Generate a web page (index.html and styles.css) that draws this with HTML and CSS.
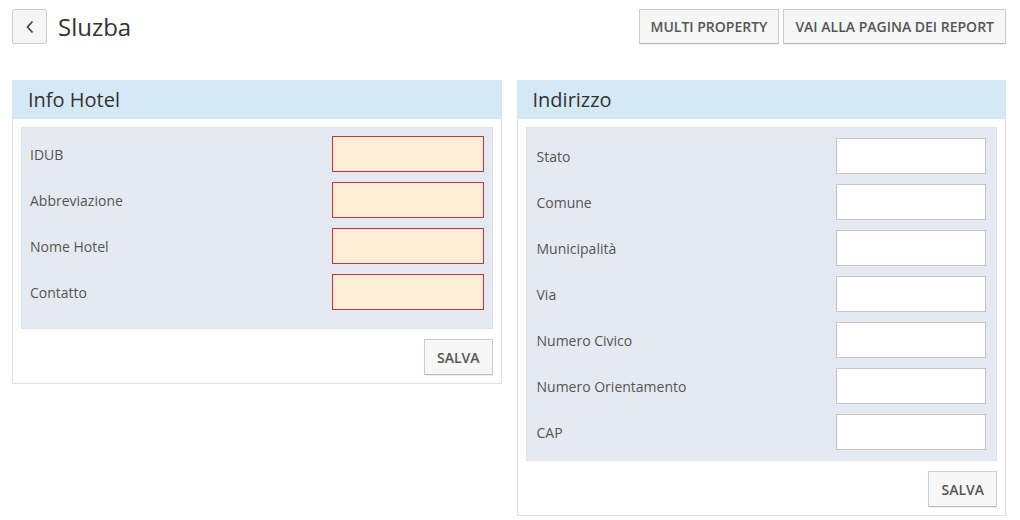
FILE: index.html
```html
<!DOCTYPE html>
<html lang="it">

<head>
    <meta charset="UTF-8">
    <title>Sluzba</title>
    <link rel="stylesheet" href="styles.css">
</head>

<body>
    <div class="page">
        <div class="topbar">
            <div class="title-wrap">
                <button class="back-btn" aria-label="Indietro">
                    <svg width="10" height="14" viewBox="0 0 10 14">
                        <path d="M7.5 1.5 L2.5 7 L7.5 12.5" fill="none" stroke="#444" stroke-width="1.7" />
                    </svg>
                </button>
                <h1>Sluzba</h1>
            </div>
            <div class="actions">
                <button class="btn">Multi property</button>
                <button class="btn">Vai alla pagina dei report</button>
            </div>
        </div>

        <div class="panels">
            <div class="panel">
                <div class="panel-head">Info Hotel</div>
                <div class="panel-body">
                    <div class="fields">
                        <div class="row"><label>IDUB</label><input class="required" type="text"></div>
                        <div class="row"><label>Abbreviazione</label><input class="required" type="text"></div>
                        <div class="row"><label>Nome Hotel</label><input class="required" type="text"></div>
                        <div class="row"><label>Contatto</label><input class="required" type="text"></div>
                    </div>
                    <div class="panel-foot">
                        <button class="btn">Salva</button>
                    </div>
                </div>
            </div>

            <div class="panel">
                <div class="panel-head">Indirizzo</div>
                <div class="panel-body">
                    <div class="fields wide">
                        <div class="row"><label>Stato</label><input type="text"></div>
                        <div class="row"><label>Comune</label><input type="text"></div>
                        <div class="row"><label>Municipalità</label><input type="text"></div>
                        <div class="row"><label>Via</label><input type="text"></div>
                        <div class="row"><label>Numero Civico</label><input type="text"></div>
                        <div class="row"><label>Numero Orientamento</label><input type="text"></div>
                        <div class="row"><label>CAP</label><input type="text"></div>
                    </div>
                    <div class="panel-foot">
                        <button class="btn">Salva</button>
                    </div>
                </div>
            </div>
        </div>
    </div>
</body>

</html>
```

FILE: styles.css
```css
body {
    margin: 0;
    font-family: "Open Sans", Arial, sans-serif;
    background-color: #fff;
    color: #333;
}

.page {
    padding: 9px 14px 0 12px;
}

.topbar {
    display: flex;
    justify-content: space-between;
    align-items: center;
}

.title-wrap {
    display: flex;
    align-items: center;
}

.back-btn {
    width: 35px;
    height: 35px;
    padding: 0;
    border: 1px solid #ccc;
    border-radius: 2px;
    background-color: #f6f6f6;
    display: flex;
    align-items: center;
    justify-content: center;
    cursor: pointer;
}

h1 {
    margin: 0 0 0 11px;
    font-size: 24px;
    font-weight: normal;
    color: #333;
}

.actions {
    display: flex;
    gap: 4px;
}

.btn {
    height: 35px;
    padding: 0 11px;
    font-family: "Open Sans", Arial, sans-serif;
    font-size: 14px;
    font-weight: 600;
    text-transform: uppercase;
    color: #555;
    background-color: #f7f7f7;
    border: 1px solid #ccc;
    border-bottom-color: #bbb;
    border-radius: 1px;
    box-shadow: 0 1px 1px rgba(0, 0, 0, 0.08);
    cursor: pointer;
}

.panels {
    display: grid;
    grid-template-columns: 1fr 1fr;
    gap: 15px;
    align-items: start;
    margin-top: 36px;
}

.panel {
    border: 1px solid #e0e0e0;
}

.panel-head {
    height: 39px;
    line-height: 40px;
    margin: -1px -1px 0;
    padding-left: 16px;
    background-color: #d5e8f5;
    font-size: 20px;
    color: #333;
}

.panel-body {
    padding: 8px;
}

.fields {
    background-color: #e5eaf2;
    border: 1px solid #dde3ea;
    padding: 8px 8px 0;
}

.fields.wide {
    padding: 10px 10px 0;
}

.row {
    display: flex;
    justify-content: space-between;
    align-items: center;
    margin-bottom: 10px;
}

.fields:not(.wide) .row:last-child {
    margin-bottom: 18px;
}

label {
    font-size: 14px;
    color: #555;
}

input {
    box-sizing: border-box;
    width: 150px;
    height: 36px;
    border: 1px solid #c4c4c4;
    background-color: #fff;
    margin: 0;
}

input.required {
    width: 152px;
    background-color: #fdefd7;
    border-color: #c8343a;
}

.panel-foot {
    display: flex;
    justify-content: flex-end;
    margin-top: 10px;
}

.panel-foot .btn {
    height: 36px;
    padding: 0 12px;
}
```
